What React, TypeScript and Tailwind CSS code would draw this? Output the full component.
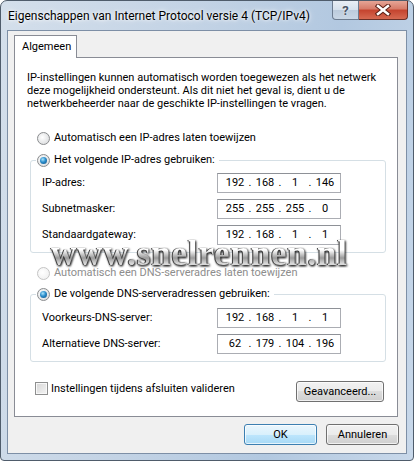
import React from 'react'

function Radio({ checked, disabled }: { checked?: boolean; disabled?: boolean }) {
  return (
    <span
      className={
        'w-[13px] h-[13px] shrink-0 rounded-full border flex items-center justify-center ' +
        (disabled
          ? 'border-[#c4c4c4] bg-[radial-gradient(circle_at_40%_40%,#ffffff,#ececec)]'
          : 'border-[#8a8c8e] bg-[radial-gradient(circle_at_40%_40%,#ffffff,#d4d6d8)]')
      }
    >
      {checked && (
        <span className="w-[7px] h-[7px] rounded-full bg-[radial-gradient(circle_at_40%_35%,#a9e4fb,#2a8ccb_45%,#0f4e7e)]" />
      )}
    </span>
  )
}

function IpField({ parts }: { parts: string[] }) {
  return (
    <div className="w-[124px] h-[20px] ml-auto border border-[#abadb3] border-t-[#8e9197] bg-white flex items-center pl-[5px] text-black">
      {parts.map((p, i) => (
        <React.Fragment key={i}>
          {i > 0 && <span className="w-[6px] text-center">.</span>}
          <span className="w-[24px] text-center">{p}</span>
        </React.Fragment>
      ))}
    </div>
  )
}

function Row({ label, parts }: { label: string; parts: string[] }) {
  return (
    <div className="flex items-center h-[20px] pl-[11px] pr-[44px]">
      <span>{label}</span>
      <IpField parts={parts} />
    </div>
  )
}

function Group({ legend, children }: { legend: string; children: React.ReactNode }) {
  return (
    <fieldset className="ml-[15px] w-[356px] border border-[#d5dfe5] rounded-[3px] flex flex-col gap-[6px]">
      <legend className="ml-[5px] px-[1px] h-[16px] flex items-center gap-[4px]">
        <Radio checked />
        <span className="pr-[3px]">{legend}</span>
      </legend>
      {children}
    </fieldset>
  )
}

function WinButton({ label, primary, className }: { label: string; primary?: boolean; className?: string }) {
  return (
    <div
      className={
        'h-[21px] rounded-[3px] border flex items-center justify-center shadow-[inset_0_0_0_1px_rgba(255,255,255,0.7)] ' +
        (primary
          ? 'border-[#3c7fb1] bg-[linear-gradient(#eaf6fd,#d9f0fc_50%,#bee6fd_50%,#a7d9f5)] '
          : 'border-[#707070] bg-[linear-gradient(#f2f2f2,#ebebeb_50%,#dddddd_50%,#cfcfcf)] ') +
        (className ?? '')
      }
    >
      {label}
    </div>
  )
}

export default function App() {
  return (
    <div className="w-[414px] h-[461px] relative overflow-hidden bg-white font-['Roboto',sans-serif] text-[11px] leading-[16px] text-black">
      <div className="h-full rounded-t-[7px] rounded-b-[4px] border border-[#4f5c6b] bg-[linear-gradient(100deg,#d4dfeb,#c3d3e5_40%,#b2c8e0_70%,#c8d8ea)] flex flex-col">
        {/* title bar */}
        <div className="h-[29px] shrink-0 flex pl-[7px] pr-[5px]">
          <div className="self-center text-[12px] [text-shadow:0_0_6px_#ffffff,0_0_3px_#ffffff]">
            Eigenschappen van Internet Protocol versie 4 (TCP/IPv4)
          </div>
          <div className="ml-auto self-start flex h-[19px]">
            <div className="w-[27px] h-full rounded-bl-[4px] border border-t-0 border-[#6c7b8f] bg-[linear-gradient(#e8eef5,#d5e0ec_50%,#bccbdc_50%,#c9d7e6)] flex items-center justify-center text-[#4a5566] font-bold text-[13px] leading-none [text-shadow:0_0_2px_#ffffff]">
              ?
            </div>
            <div className="w-[49px] h-full rounded-br-[4px] border border-l-0 border-t-0 border-[#6b2f26] bg-[linear-gradient(#e6a596,#d67a68_45%,#c4432e_50%,#d66a52)] flex items-center justify-center">
              <svg width="16" height="12" viewBox="0 0 16 12">
                <path d="M3 2 L13 10 M13 2 L3 10" stroke="#5a1e14" strokeWidth="4.5" strokeLinecap="square" />
                <path d="M3 2 L13 10 M13 2 L3 10" stroke="#ffffff" strokeWidth="2.5" strokeLinecap="square" />
              </svg>
            </div>
          </div>
        </div>

        {/* client area */}
        <div className="mx-[6px] h-[424px] border border-[#7d8fa6] bg-[#f0f0f0] flex flex-col pt-[4px] pl-[6px]">
          <div className="w-[63px] h-[23px] -mb-[1px] relative z-10 bg-white border border-b-0 border-[#898c95] pl-[7px] flex items-center">
            Algemeen
          </div>
          <div className="w-[384px] h-[360px] bg-white border border-[#898c95] flex flex-col">
            <div className="mt-[13px] ml-[12px] leading-[13px] whitespace-nowrap">
              IP-instellingen kunnen automatisch worden toegewezen als het netwerk
              <br />
              deze mogelijkheid ondersteunt. Als dit niet het geval is, dient u de
              <br />
              netwerkbeheerder naar de geschikte IP-instellingen te vragen.
            </div>

            <div className="mt-[20px] ml-[22px] h-[16px] flex items-center gap-[4px]">
              <Radio />
              <span>Automatisch een IP-adres laten toewijzen</span>
            </div>

            <div className="mt-[6px]">
              <Group legend="Het volgende IP-adres gebruiken:">
                <div className="pt-[5px] pb-[7px] flex flex-col gap-[6px]">
                  <Row label="IP-adres:" parts={['192', '168', '1', '146']} />
                  <Row label="Subnetmasker:" parts={['255', '255', '255', '0']} />
                  <Row label="Standaardgateway:" parts={['192', '168', '1', '1']} />
                </div>
              </Group>
            </div>

            <div className="mt-[12px] ml-[22px] h-[16px] flex items-center gap-[4px] text-[#8d8d8d]">
              <Radio disabled />
              <span>Automatisch een DNS-serveradres laten toewijzen</span>
            </div>

            <div className="mt-[5px]">
              <Group legend="De volgende DNS-serveradressen gebruiken:">
                <div className="pt-[6px] pb-[7px] flex flex-col gap-[6px]">
                  <Row label="Voorkeurs-DNS-server:" parts={['192', '168', '1', '1']} />
                  <Row label="Alternatieve DNS-server:" parts={['62', '179', '104', '196']} />
                </div>
              </Group>
            </div>

            <div className="mt-[19px] ml-[20px] mr-[13px] flex items-start">
              <div className="mt-[1px] h-[13px] flex items-center gap-[3px]">
                <span className="w-[13px] h-[13px] border border-[#8e8f8f] bg-[linear-gradient(135deg,#d6d6d6,#f4f4f4)] shadow-[inset_0_0_0_1px_#f8f8f8]" />
                <span>Instellingen tijdens afsluiten valideren</span>
              </div>
              <WinButton label="Geavanceerd..." className="ml-auto w-[88px]" />
            </div>
          </div>

          <div className="mt-[7px] mr-[7px] flex justify-end gap-[9px]">
            <WinButton label="OK" primary className="w-[73px]" />
            <WinButton label="Annuleren" className="w-[73px]" />
          </div>
        </div>
      </div>

      {/* watermark */}
      <div className="absolute left-[51px] top-[234px] font-['Liberation_Serif',serif] font-bold text-[35px] leading-[40px] tracking-[0.8px] bg-[linear-gradient(#ffffff,#ffffff_40%,#9a9a9a_60%,#dddddd_75%,#7a7a7a)] bg-clip-text text-transparent [filter:drop-shadow(1px_1px_1px_#222222)_drop-shadow(-1px_0_0_#444444)]">
        www.snelrennen.nl
      </div>
    </div>
  )
}
